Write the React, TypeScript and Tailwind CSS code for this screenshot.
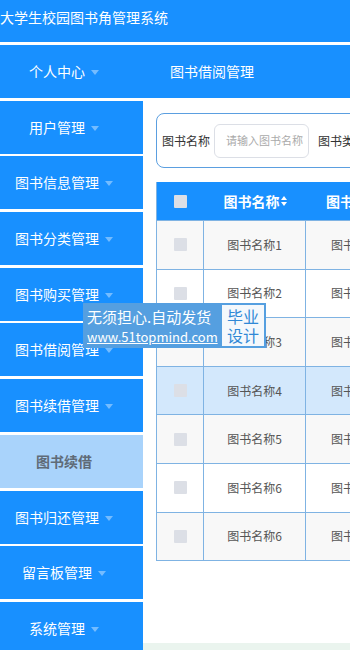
import React from "react";

const menu = [
  "用户管理",
  "图书信息管理",
  "图书分类管理",
  "图书购买管理",
  "图书借阅管理",
  "图书续借管理",
  "图书续借",
  "图书归还管理",
  "留言板管理",
  "系统管理",
];

const rows = ["图书名称1", "图书名称2", "图书名称3", "图书名称4", "图书名称5", "图书名称6", "图书名称6"];

function Caret() {
  return (
    <span className="ml-[6px] inline-block w-0 h-0 border-l-[4px] border-r-[4px] border-t-[5px] border-l-transparent border-r-transparent border-t-white/40 translate-y-[1px]" />
  );
}

function Check() {
  return <span className="inline-block w-[13px] h-[13px] bg-[#dcdfe6] rounded-[1px]" />;
}

function SortIcon() {
  return (
    <svg width="6" height="10" viewBox="0 0 6 10" className="ml-[1px]">
      <path d="M3 0 L6 4 H0 Z" fill="white" />
      <path d="M3 10 L6 6 H0 Z" fill="white" />
    </svg>
  );
}

export default function App() {
  const font = { fontFamily: '"Noto Sans CJK SC", "Noto Sans", sans-serif' };
  return (
    <div className="w-[350px] h-[650px] overflow-hidden bg-white relative" style={font}>
      <div className="h-[42px] bg-[#1890ff] text-white text-[14px] leading-[18px] pt-[8px] whitespace-nowrap">
        大学生校园图书角管理系统
      </div>
      <div className="h-[3px] bg-white" />

      <div className="flex">
        {/* sidebar */}
        <div className="w-[143px] shrink-0 flex flex-col gap-[2.7px]">
          <div className="h-[53px] bg-[#1890ff] flex items-center justify-center pr-[15px] text-white text-[14px]">
            个人中心
            <Caret />
          </div>
          {menu.map((m) =>
            m === "图书续借" ? (
              <div
                key={m}
                className="h-[53px] bg-[#a9d3fb] flex items-center justify-center pr-[15px] text-[#5f6b78] text-[14px] font-bold"
              >
                {m}
              </div>
            ) : (
              <div
                key={m}
                className="h-[53px] bg-[#1890ff] flex items-center justify-center pr-[15px] text-white text-[14px] whitespace-nowrap"
              >
                {m}
                <Caret />
              </div>
            )
          )}
        </div>

        {/* main */}
        <div className="flex-1 min-w-0 flex flex-col h-[605px]">
          <div className="h-[53px] bg-[#1890ff] flex items-center pl-[27px] text-white text-[14px] whitespace-nowrap">
            图书借阅管理
          </div>
          <div className="flex-1 pl-[13px] pt-[15px] overflow-hidden">
            <div className="w-[400px] h-[55px] border-[1.5px] border-[#5b9fe0] rounded-[8px] flex items-center pl-[5px] text-[12px] text-[#333] whitespace-nowrap">
              <span>图书名称</span>
              <div className="ml-[4px] w-[95px] h-[34px] border border-[#dcdfe6] rounded-[6px] flex items-center pl-[11px] text-[11px] text-[#aaa]">
                请输入图书名称
              </div>
              <span className="ml-[9px]">图书类别</span>
            </div>

            <div className="mt-[14px] w-[400px] border-l border-b border-[#7fb3e3]">
              <div className="h-[38px] bg-[#1890ff] flex items-center text-white text-[14px] font-bold whitespace-nowrap">
                <div className="w-[47px] flex justify-center">
                  <Check />
                </div>
                <div className="w-[102px] flex items-center justify-center">
                  图书名称
                  <SortIcon />
                </div>
                <div className="flex-1 pl-[20px]">图书类别</div>
              </div>
              {rows.map((r, i) => (
                <div
                  key={i}
                  className={
                    "h-[48.6px] flex text-[12px] text-[#555] border-t border-[#7fb3e3] whitespace-nowrap " +
                    (i === 3 ? "bg-[#d3e8fc]" : i % 2 === 0 ? "bg-[#f8f8f8]" : "bg-white")
                  }
                >
                  <div className="w-[47px] flex items-center justify-center border-r border-[#7fb3e3]">
                    <Check />
                  </div>
                  <div className="w-[102px] flex items-center justify-center border-r border-[#7fb3e3]">{r}</div>
                  <div className="flex-1 flex items-center pl-[25px]">图书类别</div>
                </div>
              ))}
            </div>
          </div>
          <div className="h-[7px] bg-[#eaf4ee]" />
        </div>
      </div>

      {/* watermark */}
      <div className="absolute left-[83px] top-[303px] w-[183px] h-[45px] bg-[#559fe0] flex items-center pl-[4px] pr-[2px] whitespace-nowrap">
        <div className="flex flex-col text-white">
          <span className="text-[15px] leading-[21px]">无须担心.自动发货</span>
          <span className="text-[13px] leading-[19px] underline">www.51topmind.com</span>
        </div>
        <div className="ml-auto w-[42px] h-[41px] bg-[#f4f8fc] flex flex-col items-center justify-center text-[#2f88d6] text-[16px] leading-[19px]">
          <span>毕业</span>
          <span>设计</span>
        </div>
      </div>
    </div>
  );
}
